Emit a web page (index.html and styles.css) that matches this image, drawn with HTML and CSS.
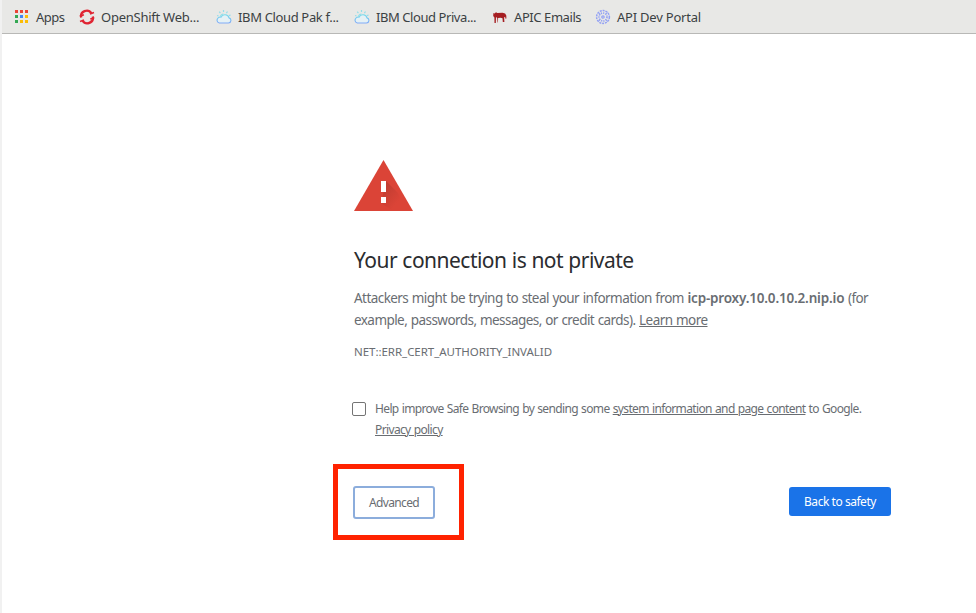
FILE: index.html
```
<!DOCTYPE html>
<html lang="en">
<head>
<meta charset="utf-8">
<title>Privacy error</title>
<link rel="stylesheet" href="styles.css">
</head>
<body>
<svg class="defs" width="0" height="0" aria-hidden="true">
  <defs>
    <linearGradient id="sky" x1="0" y1="0" x2="0" y2="1"><stop offset="0" stop-color="#74dcec"/><stop offset="1" stop-color="#80aaf8"/></linearGradient>
    <linearGradient id="shade" x1="0" y1="0" x2=".7" y2=".7"><stop offset="0" stop-color="#b93a2f"/><stop offset="1" stop-color="#db4437"/></linearGradient>
    <symbol id="cloud" viewBox="0 0 16 16">
      <path d="M3.3 14h9.2a2.6 2.6 0 0 0 .5-5.1A4.3 4.3 0 0 0 5 8.2 3 3 0 0 0 3.3 14z" fill="#e5f1f5" stroke="url(#sky)" stroke-width="1.1"/>
      <path d="M1 6.5l1.6.5M3.2 2.7l1.2 1.4M7.5 1v2M11.5 2.5l-1.1 1.6M14.6 6l-1.8.6M4.3 8a3.7 3.7 0 0 1 3.2-3" fill="none" stroke="#94dfe9" stroke-width="1.2"/>
    </symbol>
  </defs>
</svg>
<nav class="bookmarks">
  <a class="bookmark apps"><svg viewBox="0 0 13 13"><path fill="#ea4335" d="M0 0h3v3H0zM5 0h3v3H5zM10 0h3v3h-3z"/><path fill="#34a853" d="M0 5h3v3H0zM0 10h3v3H0z"/><path fill="#4285f4" d="M5 5h3v3H5z"/><path fill="#fbbc05" d="M10 5h3v3h-3zM5 10h3v3H5zM10 10h3v3h-3z"/></svg><span>Apps</span></a>
  <a class="bookmark openshift"><svg viewBox="0 0 16 16" fill="none" stroke="#df2533" stroke-width="2.3"><path d="M2.2 8.5A5.6 5.6 0 0 1 12.4 4.3M13.8 7.5A5.6 5.6 0 0 1 3.6 11.7"/><path d="M.8 7.3l4.1-1.6M11 5l4-1.5M1 12.5l4-1.5M11.2 10.1l4-1.6" stroke-width="1.5"/></svg><span>OpenShift Web...</span></a>
  <a class="bookmark pak"><svg><use href="#cloud"/></svg><span>IBM Cloud Pak f...</span></a>
  <a class="bookmark private"><svg><use href="#cloud"/></svg><span>IBM Cloud Priva...</span></a>
  <a class="bookmark emails"><svg viewBox="0 0 16 16"><path fill="#a51e22" d="M1.4 4l1.1.4L4 3.2l1.3.8 5.2-.2 2.6.7 1.2 2.1.1 3-.9.2-.4-2-1 .6.3 4.6h-1.6l-.3-3.7-1.9-.6-2.5.3-.2 4.4H5.5L5.2 9 4 8l-.2 6H2.5L2.4 8.4 1.2 7z"/></svg><span>APIC Emails</span></a>
  <a class="bookmark portal"><svg viewBox="0 0 16 16" fill="none" stroke="#93a1f4"><circle cx="8" cy="8" r="6.4" stroke-width="1.5" stroke-dasharray="2 .9"/><circle cx="8" cy="8" r="4" stroke-width="1.6" stroke-dasharray="1.3 1"/><circle cx="8" cy="8" r="1.2" stroke-width="1.2"/><path d="M3.4 3.4l2 2M12.6 3.4l-2 2M3.4 12.6l2-2M12.6 12.6l-2-2" stroke-width=".9"/></svg><span>API Dev Portal</span></a>
</nav>
<main class="interstitial">
  <svg class="warning" viewBox="0 0 59 51"><path fill="#db4437" d="M29.5 0L59 51H0z"/><path fill="url(#shade)" d="M32 21l12 12 7 18H39L27 43z"/><path fill="#fff" d="M27 21h5v11h-5zM27 37h5v6h-5z"/></svg>
  <h1>Your connection is not private</h1>
  <p class="message">Attackers might be trying to steal your information from <strong>icp-proxy.10.0.10.2.nip.io</strong> (for<br>example, passwords, messages, or credit cards). <a>Learn more</a></p>
  <p class="code">NET::ERR_CERT_AUTHORITY_INVALID</p>
  <label class="reporting"><input type="checkbox"><span>Help improve Safe Browsing by sending some <a>system information and page content</a> to Google.<br><a>Privacy policy</a></span></label>
  <div class="actions">
    <div class="highlight"><button class="advanced">Advanced</button></div>
    <button class="safety">Back to safety</button>
  </div>
</main>
</body>
</html>
```
FILE: styles.css
```
* { box-sizing: border-box; }
body { margin: 0; height: 613px; overflow: hidden; background: #fff; border-left: 2px solid #f1f1f1; font-family: "Noto Sans", sans-serif; color: #696d72; }
.defs { display: block; }
.bookmarks { display: flex; height: 34px; background: #e8e8e6; border-bottom: 1px solid #b8b8b6; padding-left: 13px; font-size: 13px; line-height: 34px; letter-spacing: -.22px; color: #3b4143; white-space: nowrap; }
.bookmark { display: flex; align-items: center; gap: 6px; flex: none; }
.bookmark svg { width: 16px; height: 16px; flex: none; }
.apps { width: 64px; gap: 8px; letter-spacing: -.5px; }
.apps svg { width: 13px; height: 13px; }
.openshift { width: 137px; letter-spacing: -.25px; }
.pak, .private { width: 138px; letter-spacing: -.35px; }
.private { letter-spacing: -.43px; }
.emails { width: 103px; letter-spacing: -.42px; }
.interstitial { width: 538px; margin: 126px 0 0 352px; }
.warning { display: block; width: 59px; height: 51px; }
h1 { margin: 32px 0 0; font-size: 21px; line-height: 34px; font-weight: 400; letter-spacing: -.52px; word-spacing: .3px; color: #2b2c2f; white-space: nowrap; }
.message { margin: 11px 0 0; font-size: 13.5px; line-height: 21.5px; letter-spacing: -.56px; word-spacing: .6px; white-space: nowrap; }
strong { font-weight: 600; letter-spacing: -.18px; }
a { text-decoration: none; }
.interstitial a { text-decoration: underline; text-underline-offset: 1px; text-decoration-thickness: 1px; }
.code { margin: 11px 0 0; font-size: 11.5px; line-height: 20px; letter-spacing: -.04px; }
.reporting { display: flex; gap: 9px; margin: 36px 0 0 -2px; font-size: 12px; line-height: 21px; letter-spacing: -.63px; word-spacing: .6px; white-space: nowrap; }
.reporting input { appearance: none; flex: none; width: 14px; height: 14px; margin: 4px 0 0; border: 1px solid #747474; border-radius: 2px; background: #fff; }
.actions { display: flex; justify-content: space-between; align-items: flex-start; margin: 24px 0 0 -21px; }
.highlight { width: 131px; height: 76px; padding: 17px 0 0 15px; border: 5px solid #ff2200; }
button { display: block; margin: 0; padding: 0; border: 0; font: 12px/20px "Noto Sans", sans-serif; letter-spacing: -.46px; white-space: nowrap; }
.advanced { width: 82px; height: 33px; letter-spacing: -.65px; color: #696d72; background: #fff; border: 2px solid #8caddc; border-radius: 3px; }
.safety { width: 102px; height: 29px; margin: 23px 1px 0 0; color: #fff; background: #1a73e8; border-radius: 3px; }
```
